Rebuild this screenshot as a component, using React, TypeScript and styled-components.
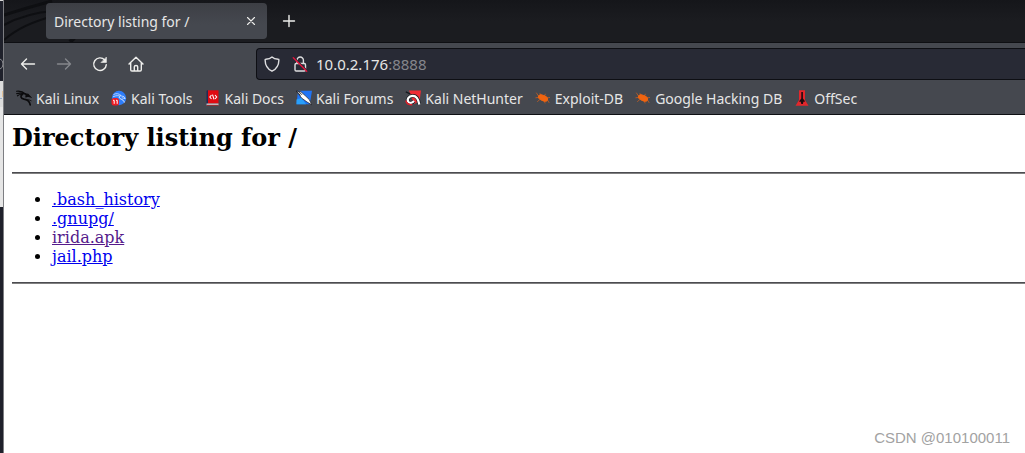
import React from "react";
import styled, { createGlobalStyle } from "styled-components";

const GlobalStyle = createGlobalStyle`
  * { box-sizing: border-box; }
  body { margin: 0; background: #ffffff; }
`;

const Desktop = styled.div`
  display: flex;
  min-height: 100vh;
  position: relative;
`;

const BackWindow = styled.div`
  display: flex;
  flex-direction: column;
  flex: 0 0 4px;
  border-right: 1px solid #7d7e82;
  background: #1f212b;
`;

const BackPane = styled.div<{ $height: number; $color: string }>`
  height: ${(p) => p.$height}px;
  background: ${(p) => p.$color};
  svg { display: block; }
`;

const Browser = styled.div`
  flex: 1;
  min-width: 0;
  font-family: "Noto Sans", "Open Sans", sans-serif;
  font-size: 14px;
  color: #e6e6e6;
`;

const TabBar = styled.header`
  position: relative;
  display: flex;
  align-items: center;
  height: 43px;
  padding-left: 42px;
  background: linear-gradient(#15161a, #1b1c20 50%);
  border-bottom: 1px solid #0e0f13;
`;

const Dragon = styled.svg`
  position: absolute;
  left: 0;
  top: 0;
`;

const Tab = styled.div`
  position: relative;
  display: flex;
  align-items: center;
  justify-content: space-between;
  width: 221px;
  height: 36px;
  padding: 0 8px;
  border-radius: 4px;
  background: linear-gradient(#3d3f45, #45484f 60%);
`;

const TabTitle = styled.span`
  white-space: nowrap;
`;

const IconButton = styled.button<{ $size: number }>`
  display: flex;
  align-items: center;
  justify-content: center;
  width: ${(p) => p.$size}px;
  height: ${(p) => p.$size}px;
  padding: 0;
  border: 0;
  background: none;
  color: #eeeeec;
  &:disabled { color: #85878c; }
`;

const NewTab = styled(IconButton)`
  margin-left: 6px;
`;

const Toolbar = styled.nav`
  display: flex;
  align-items: center;
  height: 41px;
  padding-left: 6px;
  background: #45484f;
`;

const NavButtons = styled.div`
  display: flex;
  width: 246px;
`;

const UrlBar = styled.form`
  display: flex;
  align-items: center;
  flex: 1;
  height: 32px;
  padding-left: 7px;
  background: #282a35;
  border: 1px solid #0e0f14;
  border-right: 0;
  border-radius: 4px 0 0 4px;
  font-size: 15px;
`;

const SiteInfo = styled.div`
  display: flex;
  gap: 12px;
  padding-right: 8px;
`;

const Address = styled.div`
  display: grid;
  flex: 1;
  line-height: 20px;
  > * { grid-area: 1 / 1; }
`;

const AddressText = styled.span`
  pointer-events: none;
  span { color: #85868c; }
`;

const AddressInput = styled.input`
  width: 100%;
  min-width: 0;
  padding: 0;
  border: 0;
  outline: 0;
  background: transparent;
  font: inherit;
  color: transparent;
`;

const Bookmarks = styled.nav`
  display: flex;
  align-items: center;
  gap: 12px;
  height: 31px;
  padding: 0 0 2px 12px;
  background: #45484f;
  border-bottom: 1px solid #0e0f13;
`;

const Bookmark = styled.a`
  display: flex;
  align-items: center;
  gap: 4px;
  color: inherit;
  text-decoration: none;
  white-space: nowrap;
`;

const Page = styled.main`
  padding: 8px 0 8px 8px;
  font-family: "DejaVu Serif", serif;
  font-size: 16px;
  line-height: 19px;
  color: #000000;
`;

const Heading = styled.h1`
  margin: 0 0 20px;
  font-size: 24px;
  line-height: 29px;
`;

const Rule = styled.hr`
  margin: 0;
  border: 0;
  border-top: 1px solid #4c4c50;
  border-bottom: 1px solid #808080;
`;

const Listing = styled.ul`
  margin: 16px 0;
  padding-left: 40px;
`;

const FileLink = styled.a<{ $visited?: boolean }>`
  color: ${(p) => (p.$visited ? "#551a8b" : "#0000ee")};
`;

const Watermark = styled.div`
  position: absolute;
  right: 15px;
  bottom: 6px;
  font: 15px/18px "Liberation Sans", Arial, sans-serif;
  color: #a2a2a2;
`;

const stroke = {
  fill: "none",
  stroke: "currentColor",
  strokeWidth: 1.4,
  strokeLinecap: "round" as const,
  strokeLinejoin: "round" as const,
};

const Back = () => (
  <svg width="16" height="16" viewBox="0 0 16 16" {...stroke}>
    <path d="M14.5 8H1.5M6.5 3L1.5 8l5 5" />
  </svg>
);
const Forward = () => (
  <svg width="16" height="16" viewBox="0 0 16 16" {...stroke}>
    <path d="M1.5 8h13M9.5 3l5 5-5 5" />
  </svg>
);
const Reload = () => (
  <svg width="16" height="16" viewBox="0 0 16 16" {...stroke}>
    <path d="M12.7 4A6.3 6.3 0 1 0 14.3 8.6" />
    <path d="M14.4 1.4v5.1H9.3z" fill="currentColor" strokeWidth="0.6" />
  </svg>
);
const Home = () => (
  <svg width="16" height="16" viewBox="0 0 16 16" {...stroke}>
    <path d="M1 8l7-6.8L15 8M2.7 6.6v7.2q0 1.2 1.2 1.2h8.2q1.2 0 1.2-1.2V6.6M6.3 14.8v-4q0-1.3 1.7-1.3t1.7 1.3v4" />
  </svg>
);
const Shield = () => (
  <svg width="16" height="16" viewBox="0 0 16 16" {...stroke} color="#dedee0">
    <path d="M8 .9C6.2 2.6 4 3 1.7 3.2q-.6 0-.6.7C1.2 9.5 3.5 13 8 15.2 12.5 13 14.8 9.5 14.9 3.900q0-.7-.6-.7C12 3 9.8 2.6 8 .9z" />
  </svg>
);
const Lock = () => (
  <svg width="16" height="16" viewBox="0 0 16 16" {...stroke} color="#dedee0">
    <rect x="3" y="7.5" width="10.5" height="7.5" rx="1.2" />
    <path d="M5 7.3V4.2a3.2 3.2 0 0 1 6.4 0v3" />
    <path d="M2.500 2l13 13" stroke="#282a35" strokeWidth="1.4" />
    <path d="M1.3 1.8l13.4 13.4" stroke="#e1143c" strokeWidth="1.4" />
  </svg>
);

const KaliIcon = () => (
  <svg width="16" height="16" viewBox="0 0 16 16" fill="none" stroke="#0b0b0d" strokeLinecap="round">
    <path d="M.5 1.2C4 .8 7 1.500 9.500 3.800M.7 3.600C3.500 2.800 6 3 8.500 4M1.500 5.800C3 4.600 4.500 4.200 6.500 4.300" strokeWidth="1.100" />
    <path d="M6.500 4.300C4 5.800 4.500 8.600 8 9.200c3.500.4 5.500 2 6.200 5.600" strokeWidth="1.700" />
    <path d="M9 3.800l3 .4 2.600 2.800-2.600-.8-2.200.6" strokeWidth="1.200" fill="#0b0b0d" />
    <path d="M10 9.700q2.500-.8 5.200 1" strokeWidth=".8" />
  </svg>
);
const ToolsIcon = () => (
  <svg width="16" height="16" viewBox="0 0 16 16">
    <circle cx="8" cy="8" r="7.2" fill="#2d7dfa" />
    <path d="M2.500 4.500c3-1.500 5.500-.8 7.500 1M2 6.800c3-1.500 5.500-1.300 7.500-.6M9 5.500l4 1.200 1.200 2-3.400-1" fill="none" stroke="#d5e6ff" strokeWidth=".8" />
    <path d="M8.500 6.500C7 9.300 13 8.800 13.300 12.500" fill="none" stroke="#fff" strokeWidth=".9" />
    <rect x=".5" y="8" width="7.5" height="7.5" rx="2.500" fill="#ec1c24" />
    <path d="M2 10.300h1.2v3.500M5 10.300h1.2v3.500" fill="none" stroke="#fff" strokeWidth="1" />
  </svg>
);
const DocsIcon = () => (
  <svg width="16" height="16" viewBox="0 0 16 16">
    <path d="M1.500 1.500Q1.500.3 3 .3V15H1.500z" fill="#202b55" />
    <path d="M3 .3h10.500v13.200H3z" fill="#e00b12" />
    <path d="M1.500 13.500h12v2h-12z" fill="#c9c9cc" />
    <path d="M1.500 14.900h12v.8h-12z" fill="#8e1015" />
    <path d="M6.500 5L4.800 7l1.700 2M10 5l1.700 2L10 9M7.500 4.700l1.500 4.600" fill="none" stroke="#fff" strokeWidth="1.100" />
  </svg>
);
const ForumsIcon = () => (
  <svg width="16" height="16" viewBox="0 0 16 16">
    <path d="M2 .8h14l-2.200 13.500H.5z" fill="#1f74f5" />
    <path d="M.5 9.500l5-1.500 4.500 6.300H.5z" fill="#29a0fa" />
    <path d="M.2 1l4.800.8 4.700 4.300 3.600 3.500 2.500 5.200-4.800-2.800L5.500 8z" fill="#fff" stroke="#17191f" strokeWidth=".7" />
    <path d="M.5 1l4 4.500M2.500 1.300l3.500 3.500" stroke="#17191f" strokeWidth=".9" />
  </svg>
);
const NetHunterIcon = () => (
  <svg width="16" height="16" viewBox="0 0 16 16">
    <path d="M4 .5h12l-1.500 11L9 14z" fill="#ee2b35" />
    <path d="M.8 1.800l4.400 2" stroke="#17191f" strokeWidth="1.300" />
    <path d="M14 14C13.500 9.500 11.500 5.500 7.500 5.700c-4 .3-6 4-4 6.300 1.500 1.700 4 1 5.500-.8" fill="none" stroke="#17191f" strokeWidth="3.600" />
    <path d="M14.300 14.500C13.500 9.500 11.500 5.600 7.500 5.800c-4 .3-6 4-4 6.200 1.500 1.500 4 .8 5.500-1" fill="none" stroke="#fff" strokeWidth="2.200" />
    <path d="M.8 10.500q1 4.500 6.500 4.300" fill="none" stroke="#e0202a" strokeWidth="1.400" />
  </svg>
);
const BugIcon = () => (
  <svg width="16" height="16" viewBox="0 0 16 16" stroke="#f06410" strokeLinecap="round">
    <ellipse cx="8" cy="8" rx="4.800" ry="2.600" fill="#f06410" transform="rotate(24 8 8)" />
    <path d="M3.500 6L1.500 3M3 7.500L.8 7.800M4.500 9.800L2.500 11.500M6.500 5.300L5 3.500M9.500 6l.8-1.800M12 8l2.600-.5M12.500 10l1.500 2.500M9.500 11.500l.5 1.500" strokeWidth=".6" fill="none" />
  </svg>
);
const OffSecIcon = () => (
  <svg width="16" height="16" viewBox="0 0 16 16">
    <path d="M5 .3h6v9.700l3.500 5.700h-13L5 10z" fill="#e3262b" />
    <path d="M7.300 2h1.600v6.500l2.300 3-1.800.2L8.900 14H7.300l-.6-2.300-1.800-.2 2.400-3z" fill="#1d0c10" />
  </svg>
);

const bookmarks: [string, () => React.ReactElement][] = [
  ["Kali Linux", KaliIcon],
  ["Kali Tools", ToolsIcon],
  ["Kali Docs", DocsIcon],
  ["Kali Forums", ForumsIcon],
  ["Kali NetHunter", NetHunterIcon],
  ["Exploit-DB", BugIcon],
  ["Google Hacking DB", BugIcon],
  ["OffSec", OffSecIcon],
];

const files = [".bash_history", ".gnupg/", "irida.apk", "jail.php"];

export default function App() {
  return (
    <Desktop>
      <GlobalStyle />
      <BackWindow>
        <BackPane $height={1} $color="#d8d8d8" />
        <BackPane $height={80} $color="#1f212b">
          <svg width="3" height="80" fill="none">
            <path d="M0 58q3 1 3 5t-3 5" stroke="#85868c" />
          </svg>
        </BackPane>
        <BackPane $height={26} $color="#dcdcdc">
          <svg width="3" height="26">
            <path d="M2 10h1v6H2z" fill="#e3c49c" />
            <path d="M0 17h2v1H0z" fill="#9ab0c8" />
          </svg>
        </BackPane>
        <BackPane $height={100} $color="#e6e6e6" />
      </BackWindow>
      <Browser>
        <TabBar>
          <Dragon width="100" height="42" viewBox="0 0 100 42" fill="none" stroke="#0e0f12" aria-hidden="true">
            <path d="M0 15Q22 8 48 1" strokeWidth="3" />
            <path d="M0 25Q22 13 50 11" strokeWidth="2" />
            <path d="M0 40Q18 24 50 16" strokeWidth="2" />
            <path d="M66 42l6-6" strokeWidth="4" />
          </Dragon>
          <Tab>
            <TabTitle>Directory listing for /</TabTitle>
            <IconButton $size={16} aria-label="Close tab">
              <svg width="10" height="10" viewBox="0 0 10 10" {...stroke} strokeWidth={1.1}>
                <path d="M1.5 1.5l7 7M8.5 1.5l-7 7" />
              </svg>
            </IconButton>
          </Tab>
          <NewTab $size={32} aria-label="New tab">
            <svg width="14" height="14" viewBox="0 0 14 14" {...stroke}>
              <path d="M7 1.5v11M1.500 7h11" />
            </svg>
          </NewTab>
        </TabBar>
        <Toolbar>
          <NavButtons>
            <IconButton $size={36} aria-label="Back"><Back /></IconButton>
            <IconButton $size={36} disabled aria-label="Forward"><Forward /></IconButton>
            <IconButton $size={36} aria-label="Reload"><Reload /></IconButton>
            <IconButton $size={36} aria-label="Home"><Home /></IconButton>
          </NavButtons>
          <UrlBar>
            <SiteInfo>
              <Shield />
              <Lock />
            </SiteInfo>
            <Address>
              <AddressInput aria-label="Address" />
              <AddressText>10.0.2.176<span>:8888</span></AddressText>
            </Address>
          </UrlBar>
        </Toolbar>
        <Bookmarks>
          {bookmarks.map(([label, Icon]) => (
            <Bookmark href="#" key={label}>
              <Icon />
              {label}
            </Bookmark>
          ))}
        </Bookmarks>
        <Page>
          <Heading>Directory listing for /</Heading>
          <Rule />
          <Listing>
            {files.map((name) => (
              <li key={name}>
                <FileLink href="#" $visited={name === "irida.apk"}>{name}</FileLink>
              </li>
            ))}
          </Listing>
          <Rule />
        </Page>
      </Browser>
      <Watermark>CSDN @010100011</Watermark>
    </Desktop>
  );
}
